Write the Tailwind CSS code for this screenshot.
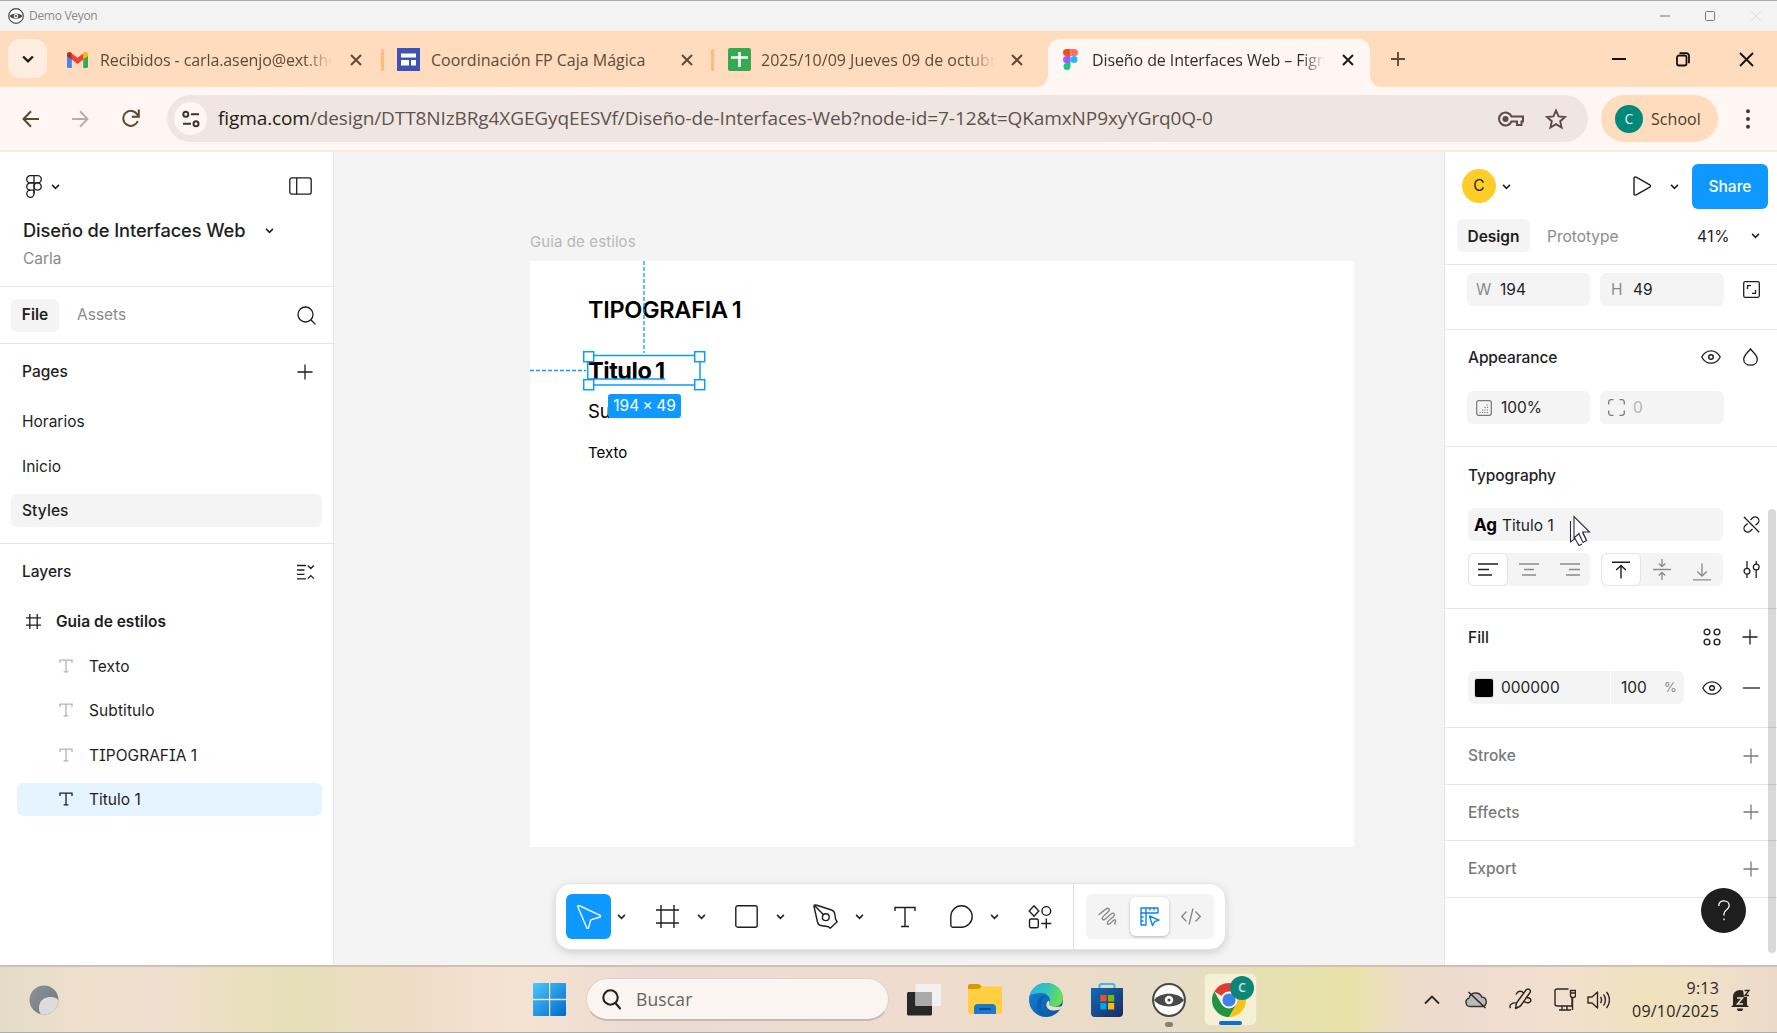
<!DOCTYPE html>
<html lang="es">
<head>
<meta charset="utf-8">
<title>Demo Veyon</title>
<script src="https://cdn.jsdelivr.net/npm/@tailwindcss/browser@4"></script>
</head>
<body class="w-[1777px] h-[1033px] overflow-hidden bg-[#f3f3f3] font-['Inter',sans-serif] text-[#1e1e1e]">
<svg class="hidden">
  <symbol id="chev" viewBox="0 0 10 10"><path d="M1.2 3.2 5 7 8.800 3.200" fill="none" stroke="currentColor" stroke-width="1.700"/></symbol>
  <symbol id="plus" viewBox="0 0 16 16"><path d="M8 .5v15M.5 8h15" fill="none" stroke="currentColor" stroke-width="1.3"/></symbol>
  <symbol id="x" viewBox="0 0 12 12"><path d="M1 1l10 10M11 1 1 11" fill="none" stroke="currentColor" stroke-width="2"/></symbol>
  <symbol id="tee" viewBox="0 0 14 14"><path d="M1 4V1.2h12V4M7 1.2v11.6M4.6 12.8h4.8" fill="none" stroke="currentColor" stroke-width="1.3"/></symbol>
  <symbol id="eye" viewBox="0 0 20 14"><path d="M.8 7C3 2.6 6.3.8 10 .8S17 2.600 19.200 7C17 11.400 13.700 13.200 10 13.200S3 11.400.8 7Z" fill="none" stroke="currentColor" stroke-width="1.3"/><circle cx="10" cy="7" r="2.300" fill="none" stroke="currentColor" stroke-width="1.4"/></symbol>
</svg>

<!-- window title bar -->
<div class="flex h-[31px] items-center border-t border-[#a9a7a9] bg-[#f3f3f3] pl-2 text-[#8a8a8a] font-['Open_Sans',sans-serif]">
  <svg class="size-4 shrink-0" viewBox="0 0 16 16"><circle cx="8" cy="8" r="7.300" fill="#fff" stroke="#4a4a4a" stroke-width="1.200"/><path d="M1.500 8C4 4.500 12 4.500 14.500 8 12 11.500 4 11.500 1.500 8Z" fill="#4a4a4a"/><circle cx="8" cy="8" r="2.200" fill="#fff"/><circle cx="8" cy="8" r="1.100" fill="#4a4a4a"/></svg>
  <span class="ml-[5px] w-[1631px] text-[12px] tracking-[-0.3px]">Demo Veyon</span>
  <svg class="h-3 w-[104px]" viewBox="0 0 104 12" fill="none"><path d="M0 6h10" stroke="#777"/><rect x="45.500" y="1.500" width="9" height="9" rx="1" stroke="#777"/><path d="M91 1l10 10M101 1 91 11" stroke="#ddd"/></svg>
</div>

<!-- browser tabs -->
<div class="relative flex h-14 items-end bg-[#fedcbd] font-['Open_Sans',sans-serif] text-[16px] text-[#5e4b35]">
  <div class="mb-[9px] ml-2 flex size-[39px] shrink-0 items-center justify-center rounded-xl bg-[#ffeee0] text-[#1f1a14]"><svg class="size-3.5" viewBox="0 0 10 10"><path d="M1.500 3.200 5 6.700 8.500 3.200" fill="none" stroke="currentColor" stroke-width="1.700"/></svg></div>
  <div class="flex h-12 w-[337px] shrink-0 items-center pb-[7px] pl-5">
    <svg class="h-4 w-[21px] shrink-0" viewBox="0 0 21 16"><path d="M0 2.500V14.500A1.500 1.500 0 0 0 1.500 16H4.800V6Z" fill="#4285f4"/><path d="M21 2.500V14.500A1.500 1.500 0 0 1 19.500 16H16.200V6Z" fill="#34a853"/><path d="M16.200 2V7.600L21 4V2.500C21 .1 18.200-.6 16.500.8Z" fill="#fbbc04"/><path d="M4.800 7.600V1.500L10.500 5.800 16.200 1.500V7.600L10.500 12Z" fill="#ea4335"/><path d="M0 2.500V4L4.800 7.600V1.200L4.500.8C2.800-.6 0 .1 0 2.500Z" fill="#c5221f"/></svg>
    <div class="ml-3 w-[232px] overflow-hidden whitespace-nowrap pt-px tracking-[-0.1px] [mask-image:linear-gradient(90deg,#000_88%,transparent)]">Recibidos - carla.asenjo@ext.the</div>
    <svg class="ml-[18px] size-3"><use href="#x"/></svg>
    <div class="ml-[19px] h-[22px] w-[3px] rounded bg-[#fdbd76]"></div>
  </div>
  <div class="flex h-12 w-[331px] shrink-0 items-center pb-[7px] pl-[13px]">
    <svg class="size-[23px] shrink-0" viewBox="0 0 23 23"><path d="M0 0h23v23H0Z" fill="#3f51b5"/><path d="M4 5.500h15v4H4Zm0 6.500h8v5.500H4Zm10 0h5v5.500h-5Z" fill="#fff"/></svg>
    <div class="ml-[11px] w-[237px] overflow-hidden whitespace-nowrap pt-px">Coordinación FP Caja Mágica</div>
    <svg class="ml-[13px] size-3"><use href="#x"/></svg>
    <div class="ml-[18px] h-[22px] w-[3px] rounded bg-[#fdbd76]"></div>
  </div>
  <div class="flex h-12 w-[333px] shrink-0 items-center pb-[7px] pl-[13px]">
    <svg class="size-[23px] shrink-0" viewBox="0 0 23 23"><rect width="23" height="23" rx="2" fill="#34a853"/><path d="M3 9.500h17M11.500 4v15" stroke="#fff" stroke-width="2.600"/></svg>
    <div class="ml-[10px] w-[234px] overflow-hidden whitespace-nowrap pt-px [mask-image:linear-gradient(90deg,#000_88%,transparent)]">2025/10/09 Jueves 09 de octubre</div>
    <svg class="ml-4 size-3"><use href="#x"/></svg>
  </div>
  <div class="relative flex h-12 w-[322px] shrink-0 items-center rounded-t-xl bg-[#fff7f3] pb-[7px] pl-[15px] text-[#332c29]">
    <svg class="absolute -left-3 bottom-0 size-3" viewBox="0 0 12 12"><path d="M12 0v12H0A12 12 0 0 0 12 0Z" fill="#fff7f3"/></svg>
    <svg class="absolute -right-3 bottom-0 size-3" viewBox="0 0 12 12"><path d="M0 0v12h12A12 12 0 0 1 0 0Z" fill="#fff7f3"/></svg>
    <svg class="h-[21px] w-[15px] shrink-0" viewBox="0 0 15 21"><path d="M3.500 0h4v7h-4a3.500 3.500 0 0 1 0-7Z" fill="#f24e1e"/><path d="M7.500 0h4a3.500 3.500 0 0 1 0 7h-4Z" fill="#ff7262"/><path d="M3.500 7h4v7h-4a3.500 3.500 0 0 1 0-7Z" fill="#a259ff"/><circle cx="11" cy="10.500" r="3.500" fill="#1abcfe"/><path d="M3.500 14h4v3.500a3.500 3.500 0 1 1-4-3.500Z" fill="#0acf83"/></svg>
    <div class="ml-[14px] w-[233px] overflow-hidden whitespace-nowrap pt-px tracking-[-0.1px] [mask-image:linear-gradient(90deg,#000_90%,transparent)]">Diseño de Interfaces Web – Figma</div>
    <svg class="ml-[17px] size-3 text-[#1f1a18]"><use href="#x"/></svg>
  </div>
  <svg class="mb-[21px] ml-[21px] size-[14px] shrink-0" viewBox="0 0 14 14"><path d="M7 0v14M0 7h14" stroke="#5e4b35" stroke-width="1.900"/></svg>
  <svg class="mb-[20px] ml-[207px] h-4 w-36 shrink-0" viewBox="0 0 144 16" fill="none" stroke="#111" stroke-width="1.800"><path d="M0 8h14M128 2l13 13M141 2 128 15"/><rect x="65" y="4.500" width="9.500" height="10" rx="2"/><path d="M67.500 2.200h6.500a3 3 0 0 1 3 3v7"/></svg>
</div>

<!-- address bar -->
<div class="flex h-[65px] items-center border-b-2 border-[#f9e9df] bg-[#fff7f3] pl-[22px] font-['Open_Sans',sans-serif] text-[#5b4731]">
  <svg class="h-[18px] w-[17px] shrink-0" viewBox="0 0 17 18" fill="none" stroke="currentColor" stroke-width="2"><path d="M17 9H1.500M9 1.200 1.500 9 9 16.800"/></svg>
  <svg class="ml-[33px] h-[18px] w-[17px] shrink-0 text-[#b9b0aa]" viewBox="0 0 17 18" fill="none" stroke="currentColor" stroke-width="2"><path d="M0 9h15.500M8 1.200 15.500 9 8 16.800"/></svg>
  <svg class="ml-[33px] h-[19px] w-[18px] shrink-0" viewBox="0 0 18 19" fill="none" stroke="currentColor" stroke-width="2"><path d="M15.800 12A7.500 7.500 0 1 1 15 5.200l1.500 2"/><path d="M16.800 .5v7.200h-7"/></svg>
  <div class="ml-[27px] flex h-[47px] w-[1421px] shrink-0 items-center rounded-full bg-[#efe6e1] pl-[7px] text-[#5d5450]">
    <div class="flex size-[33px] shrink-0 items-center justify-center rounded-full bg-[#fff7f3]"><svg class="size-[18px]" viewBox="0 0 18 18" fill="none" stroke="#3a3330" stroke-width="2"><circle cx="3.800" cy="4.300" r="2.500"/><path d="M9 4.300h8M1 13.700h8"/><circle cx="14" cy="13.700" r="2.500"/></svg></div>
    <div class="ml-[11px] w-[1280px] whitespace-nowrap text-[19px] tracking-[-0.1px]"><span class="text-[#211c1a]">figma.com</span>/design/DTT8NIzBRg4XGEGyqEESVf/Diseño-de-Interfaces-Web?node-id=7-12&amp;t=QKamxNP9xyYGrq0Q-0</div>
    <svg class="h-4 w-[26px] shrink-0" viewBox="0 0 26 16" fill="none" stroke="#5b4a45" stroke-width="2"><path d="M13.500 5.500H25v5h-1.500V14H19v-3.500h-5.500A6.500 6.500 0 1 1 13.500 5.500Z"/><circle cx="7.500" cy="8" r="2" fill="#5b4a45"/></svg>
    <svg class="ml-[21px] size-[22px] shrink-0" viewBox="0 0 22 22" fill="none" stroke="#5b4a45" stroke-width="1.900"><path d="m11 2.500 2.600 5.900 6.400.6-4.800 4.200 1.400 6.300L11 16.200l-5.600 3.300 1.400-6.300L2 9l6.400-.6Z"/></svg>
  </div>
  <div class="ml-[13px] flex h-[47px] w-[117px] shrink-0 items-center rounded-full bg-[#fedcbd] pl-[14px] text-[16px] text-[#4f3a29]">
    <div class="flex size-7 items-center justify-center rounded-full bg-[#00897b] text-[14px] text-white/90">C</div>
    <span class="ml-2 tracking-[0.05px]">School</span>
  </div>
  <svg class="ml-7 h-5 w-1 shrink-0" viewBox="0 0 4 20" fill="#4a3a2a"><circle cx="2" cy="2.200" r="2"/><circle cx="2" cy="10" r="2"/><circle cx="2" cy="17.800" r="2"/></svg>
</div>

<main class="flex h-[813px]">
  <!-- left panel -->
  <aside class="h-full w-[334px] shrink-0 border-r border-[#e6e6e6] bg-white text-[15.500px]">
    <div class="h-[135px] border-b border-[#e6e6e6] pl-[23px]">
      <div class="flex h-[68px] items-center">
        <svg class="ml-[3px] h-[23px] w-4" viewBox="0 0 16 23" fill="none" stroke="#1e1e1e" stroke-width="1.300"><rect x=".7" y=".7" width="14.600" height="7.200" rx="3.600"/><path d="M8 .7v18M8 7.900H4.300a3.600 3.600 0 0 0 0 7.200H8"/><path d="M8 11.500a3.600 3.600 0 1 1 7.300 0 3.600 3.600 0 0 1-7.300 0ZM4.300 15.100A3.600 3.600 0 1 0 8 18.700v-3.600"/></svg>
        <svg class="ml-[9px] size-[9px]"><use href="#chev"/></svg>
        <svg class="ml-[229px] h-[18px] w-[23px]" viewBox="0 0 23 18" fill="none" stroke="#1e1e1e" stroke-width="1.300"><rect x=".8" y=".8" width="21.400" height="16.400" rx="2.200"/><path d="M7.700.8v16.400"/></svg>
      </div>
      <div class="flex h-[21px] items-center"><span class="w-[242px] whitespace-nowrap text-[18.300px] font-medium tracking-[-0.1px]">Diseño de Interfaces Web</span><svg class="size-[9px]"><use href="#chev"/></svg></div>
      <div class="flex h-9 items-center text-[#8b8b8b]">Carla</div>
    </div>
    <div class="flex h-[57px] items-center border-b border-[#e6e6e6] pl-[11px]">
      <div class="flex h-[33px] w-12 items-center justify-center rounded-md bg-[#f4f4f4] font-semibold">File</div>
      <div class="ml-[18px] w-[220px] text-[#8b8b8b]">Assets</div>
      <svg class="size-[19px]" viewBox="0 0 19 19" fill="none" stroke="#1e1e1e" stroke-width="1.300"><circle cx="8.500" cy="8.500" r="7.500"/><path d="m13.800 13.800 4.600 4.600"/></svg>
    </div>
    <div class="h-[200px] border-b border-[#e6e6e6]">
      <div class="flex h-[55px] items-center pl-[22px]"><span class="w-[275px] font-medium">Pages</span><svg class="size-4"><use href="#plus"/></svg></div>
      <div class="flex h-[44.500px] items-center pl-[22px]">Horarios</div>
      <div class="flex h-[44.500px] items-center pl-[22px] pt-px">Inicio</div>
      <div class="flex h-[44.500px] items-center pl-[11px]"><div class="flex h-[33px] w-[311px] items-center rounded-md bg-[#f4f4f4] pl-[11px] font-medium tracking-[0.1px]">Styles</div></div>
    </div>
    <div class="flex h-[55px] items-center pl-[22px]"><span class="w-[275px] font-medium">Layers</span>
      <svg class="h-4 w-[18px]" viewBox="0 0 18 16" fill="none" stroke="#1e1e1e" stroke-width="1.300"><path d="M0 1.500h9M0 6h7.500M0 10.300h7.500M0 14.800h9M10.800 1.500l3 3 3-3M10.800 14.600l3-3 3 3"/></svg></div>
    <div class="flex h-[44.500px] items-center pl-[26px] font-semibold"><svg class="h-[15px] w-[15px]" viewBox="0 0 15 15" fill="none" stroke="#1e1e1e" stroke-width="1.300"><path d="M3.800 0v15M11.200 0v15M0 3.800h15M0 11.200h15"/></svg><span class="ml-[15px]">Guia de estilos</span></div>
    <div class="flex h-[44.500px] items-center pl-[59px]"><svg class="size-[14px] text-[#b3b3b3]"><use href="#tee"/></svg><span class="ml-4 pt-px">Texto</span></div>
    <div class="flex h-[44.500px] items-center pl-[59px]"><svg class="size-[14px] text-[#b3b3b3]"><use href="#tee"/></svg><span class="ml-4 tracking-[0.1px]">Subtitulo</span></div>
    <div class="flex h-[44.500px] items-center pl-[59px]"><svg class="size-[14px] text-[#b3b3b3]"><use href="#tee"/></svg><span class="ml-4 pt-px [font-feature-settings:'cv08']">TIPOGRAFIA 1</span></div>
    <div class="flex h-[44.500px] items-center pl-[17px]"><div class="flex h-[33px] w-[305px] items-center rounded-md bg-[#e5f4ff] pl-[42px]"><svg class="size-[14px]"><use href="#tee"/></svg><span class="ml-4">Titulo 1</span></div></div>
  </aside>

  <!-- canvas -->
  <section class="relative h-full w-[1110px] shrink-0 overflow-hidden bg-[#f4f4f4]">
    <div class="absolute left-[196px] top-[80px] text-[15px] leading-5 tracking-[0.1px] text-[#b8b8b8]">Guia de estilos</div>
    <div class="absolute left-[196px] top-[109px] h-[586px] w-[824px] bg-white text-black">
      <div class="absolute left-[58px] top-[34px] whitespace-nowrap text-[23.500px] font-semibold leading-[30px] tracking-[-0.3px] [word-spacing:-1.500px]">TIPOGRAFIA 1</div>
      <div class="absolute left-[58px] top-[95px] whitespace-nowrap text-[23.500px] font-bold leading-[30px] tracking-[-0.45px] [word-spacing:-1.500px]">Titulo 1</div>
      <div class="absolute left-[58px] top-[138px] text-[18.500px] leading-6">Subtitulo</div>
      <div class="absolute left-[58px] top-[180px] text-[15px] leading-6">Texto</div>
      <svg class="absolute left-0 top-0 h-[130px] w-[180px]" viewBox="0 0 180 130" fill="none" stroke="#0d99ff"><path d="M114 0v92M0 109.500h56" stroke-width="1.300" stroke-dasharray="4 2"/><path d="M58 118h77" stroke-width="1.500"/><rect x="57.700" y="94.500" width="112.300" height="29.500" stroke-width="1.500"/><g fill="#fff" stroke-width="1.500"><rect x="53.700" y="90.700" width="10" height="10"/><rect x="164.700" y="90.700" width="10" height="10"/><rect x="53.700" y="118.700" width="10" height="10"/><rect x="164.700" y="118.700" width="10" height="10"/></g></svg>
      <div class="absolute left-[78px] top-[133px] flex h-6 w-[73px] items-center justify-center whitespace-nowrap rounded-[3px] bg-[#0d99ff] text-[15.500px] text-white [word-spacing:-1px]">194 × 49</div>
    </div>

    <!-- floating toolbar -->
    <div class="absolute left-[221px] top-[731px] flex h-[67px] w-[671px] items-center rounded-2xl border border-[#e4e4e4] bg-white pl-[10px] shadow-[0_3px_8px_rgba(0,0,0,0.14)]">
      <div class="flex size-[45px] shrink-0 items-center justify-center rounded-md bg-[#0d99ff]"><svg class="size-6" viewBox="0 0 24 24" fill="none" stroke="#fff" stroke-width="1.400" stroke-linejoin="round"><path d="M.8 1.800 10 23.200c.3.700 1.200.6 1.400-.1L13.500 15.800c.2-.7.500-1 1.200-1.200L23 12c.8-.3.800-1.200.1-1.600L2.200.5C1.200 0 .4.800.8 1.800Z"/></svg></div>
      <svg class="ml-[6px] size-[9px] shrink-0"><use href="#chev"/></svg>
      <svg class="ml-[30px] size-[23px] shrink-0" viewBox="0 0 23 23" fill="none" stroke="#1e1e1e" stroke-width="1.400"><path d="M5 0v23M18 0v23M0 5h23M0 18h23"/></svg>
      <svg class="ml-[18px] size-[9px] shrink-0"><use href="#chev"/></svg>
      <svg class="ml-[29px] size-[23px] shrink-0" viewBox="0 0 23 23" fill="none" stroke="#1e1e1e" stroke-width="1.400"><rect x=".8" y=".8" width="21.400" height="21.400" rx="2"/></svg>
      <svg class="ml-[18px] size-[9px] shrink-0"><use href="#chev"/></svg>
      <svg class="ml-[28px] size-[25px] shrink-0" viewBox="0 0 25 25" fill="none" stroke="#1e1e1e" stroke-width="1.400" stroke-linejoin="round"><path d="M1 2.500 4.500 18c.4 1.800 1.600 3.200 3.400 3.500l7.600 1.200 1.700 1.600 7-6.600-1.600-2.200-.8-5.500c-.3-2-1.300-3.300-3.200-4L3 1C1.600.5.700 1.200 1 2.500ZM2 2l8.800 9"/><circle cx="12.800" cy="13.200" r="3.400"/></svg>
      <svg class="ml-[17px] size-[9px] shrink-0"><use href="#chev"/></svg>
      <svg class="ml-[30px] size-[22px] shrink-0" viewBox="0 0 22 22" fill="none" stroke="#1e1e1e" stroke-width="1.400"><path d="M1 5V1.500h20V5M11 1.500v19M7 20.500h8"/></svg>
      <svg class="ml-[34px] size-[23px] shrink-0" viewBox="0 0 23 23" fill="none" stroke="#1e1e1e" stroke-width="1.400"><path d="M.8 11.500A10.700 10.700 0 1 1 11.500 22.200H3A2.200 2.200 0 0 1 .8 20Z"/></svg>
      <svg class="ml-[17px] size-[9px] shrink-0"><use href="#chev"/></svg>
      <svg class="ml-[29px] size-6 shrink-0" viewBox="0 0 24 24" fill="none" stroke="#1e1e1e" stroke-width="1.400"><path d="M6 .8 10.800 6 6 11.200 1.200 6Z"/><circle cx="18.300" cy="6" r="4.400"/><rect x="1.500" y="14" width="8.800" height="8.800" rx="1.500"/><path d="M18.300 13.500v10M13.300 18.500h10"/></svg>
      <div class="ml-[21px] h-full w-px shrink-0 bg-[#e0e0e0]"></div>
      <div class="ml-[12px] flex h-[45px] w-[128px] shrink-0 items-center rounded-md bg-[#f4f4f4]">
        <svg class="ml-[12px] size-[19px] shrink-0" viewBox="0 0 19 19" fill="none" stroke="#8a8a8a" stroke-width="1.400" stroke-linecap="round" stroke-linejoin="round"><path d="M1 7.500C4 5.500 6.500 2.700 9 1.500c1.800-.8 3 .8 1.800 2.500C9 6.500 5 8.500 4.300 11c-.4 1.600 1 2.300 2.500 1.300C9.500 10.500 11.500 7.700 14 6.400c1.800-.9 3.200.6 2 2.400-1.700 2.500-5.500 4-6.500 6.500-.6 1.700.9 2.500 2.300 1.500 1.700-1.200 2.700-2.900 4.200-3.800 1.200-.7 2 .2 1.500 1.400-.5 1-1 1.600-.5 2.600"/></svg>
        <div class="ml-[13px] flex h-[39px] w-[39px] shrink-0 items-center justify-center rounded-md bg-white shadow-[0_1px_3px_rgba(0,0,0,0.25)]"><svg class="size-5" viewBox="0 0 20 20" fill="none" stroke="#0d83ea" stroke-width="1.400" stroke-linejoin="round"><path d="M1 1h17v5H6v12H1ZM1 6h5V1M10 1v2.500M14 1v2.500M1 10h2.500M1 14h2.500"/><path d="m9.500 9 3 9.500 2.200-3.800 4.300-1.500Z"/></svg></div>
        <svg class="ml-3 h-[17px] w-5 shrink-0" viewBox="0 0 20 17" fill="none" stroke="#8a8a8a" stroke-width="1.400"><path d="M5.500 3.500.8 8.500l4.700 5M14.500 3.500l4.700 5-4.700 5M12 .5 8 16.500"/></svg>
      </div>
    </div>
  </section>

  <!-- right panel -->
  <aside class="relative h-full w-[333px] shrink-0 border-l border-[#e6e6e6] bg-white text-[15.500px]">
    <div class="h-[113px] border-b border-[#e6e6e6]">
      <div class="flex h-[67px] items-center pl-[17px] pt-[1px]">
        <div class="flex size-[34px] items-center justify-center rounded-full bg-[#ffcd29]">C</div>
        <svg class="ml-[6px] size-[9px]"><use href="#chev"/></svg>
        <svg class="ml-[122px] h-5 w-[19px]" viewBox="0 0 19 20" fill="none" stroke="#1e1e1e" stroke-width="1.400" stroke-linejoin="round"><path d="M1 2.300v15.400c0 1.200 1.200 1.800 2.200 1.100l13.600-7.700c.9-.5.900-1.700 0-2.200L3.200 1.200C2.200.6 1 1.100 1 2.300Z"/></svg>
        <svg class="ml-[18px] size-[9px]"><use href="#chev"/></svg>
        <div class="ml-[13px] flex h-[45px] w-[76px] items-center justify-center rounded-md bg-[#0d99ff] pt-px font-medium text-white">Share</div>
      </div>
      <div class="flex h-[33px] items-center pl-3">
        <div class="flex h-full w-[73px] items-center justify-center rounded-md bg-[#f4f4f4] pt-0.5 font-semibold">Design</div>
        <span class="ml-[17px] w-[150px] pt-0.5 text-[#8b8b8b]">Prototype</span><span class="w-[54px] pt-0.5 tracking-[0.6px]">41%</span><svg class="size-[9px]"><use href="#chev"/></svg>
      </div>
    </div>
    <div class="flex h-[65px] border-b border-[#e6e6e6] pl-[22px] pt-2">
      <div class="flex h-[33px] w-[123px] items-center rounded-md bg-[#f4f4f4] pl-[9px] pt-px"><span class="w-6 text-[#8b8b8b]">W</span>194</div>
      <div class="ml-[10px] flex h-[33px] w-[124px] items-center rounded-md bg-[#f4f4f4] pl-[11px] pt-px"><span class="w-[22px] text-[#8b8b8b]">H</span>49</div>
      <svg class="ml-[19px] mt-2 size-[17px]" viewBox="0 0 17 17" fill="none" stroke="#1e1e1e" stroke-width="1.300"><rect x=".7" y=".7" width="15.600" height="15.600" rx="1.500"/><path d="M4.500 8V4.700H8M9 12.300h3.500V9" /></svg>
    </div>
    <div class="h-[117px] border-b border-[#e6e6e6] pl-[22px]">
      <div class="flex h-[54px] items-center"><span class="w-[234px] pl-px pt-0.5 font-medium tracking-[-0.1px]">Appearance</span><svg class="h-[14px] w-5"><use href="#eye"/></svg>
        <svg class="ml-[22px] h-[18px] w-[15px]" viewBox="0 0 15 18" fill="none" stroke="#1e1e1e" stroke-width="1.300"><path d="M7.500.8C9.500 4 14.300 7 14.300 11.200c0 3.500-2.800 6-6.800 6s-6.800-2.500-6.800-6C.7 7 5.500 4 7.500.8Z"/></svg></div>
      <div class="mt-[7px] flex">
        <div class="flex h-[33px] w-[123px] items-center rounded-md bg-[#f4f4f4] pl-[9px]"><svg class="mr-[9px] size-4" viewBox="0 0 16 16" fill="none" stroke="#777" stroke-width="1.200"><rect x=".7" y=".7" width="14.600" height="14.600" rx="2"/><path d="M3.500 12.500h9.500M6 10h7M8.500 7.500H13M10.500 5H13" stroke-dasharray="1.200 1.200"/></svg>100%</div>
        <div class="ml-[10px] flex h-[33px] w-[124px] items-center rounded-md bg-[#f4f4f4] pl-2 text-[#b3b3b3]"><svg class="mr-[8px] size-[17px]" viewBox="0 0 17 17" fill="none" stroke="#777" stroke-width="1.300"><path d="M.7 5.500V3A2.300 2.300 0 0 1 3 .7h2.500M11.500.7H14A2.300 2.300 0 0 1 16.300 3v2.500M16.300 11.500V14a2.300 2.300 0 0 1-2.300 2.300h-2.500M5.500 16.300H3A2.300 2.300 0 0 1 .7 14v-2.500"/></svg>0</div>
      </div>
    </div>
    <div class="h-[162px] border-b border-[#e6e6e6] pl-[23px]">
      <div class="flex h-14 items-center pt-px font-medium tracking-[-0.1px]">Typography</div>
      <div class="mt-[5px] flex items-center">
        <div class="flex h-[33px] w-[255px] items-center rounded-md bg-[#f4f4f4] pl-[6px] pt-0.5"><span class="w-7 text-[17px] font-bold text-black">Ag</span>Titulo 1</div>
        <svg class="ml-5 size-[17px]" viewBox="0 0 17 17" fill="none" stroke="#1e1e1e" stroke-width="1.300"><path d="M.8.8l15.400 15.400M7.500 4l2-2a3.600 3.600 0 0 1 5.300 5.300l-2.300 2M4.600 7.500l-2.500 2.300a3.600 3.600 0 0 0 5.200 5.200L9.500 13"/></svg>
      </div>
      <div class="mt-3 flex items-center">
        <div class="flex h-[33px] w-[122px] items-center rounded-md bg-[#f4f4f4]">
          <div class="flex h-full w-10 items-center justify-center rounded-md border border-[#e4e4e4] bg-white"><svg class="h-[13px] w-5" viewBox="0 0 20 13" stroke="#1e1e1e" stroke-width="1.400"><path d="M0 1h20M0 6.500h11M0 12h14"/></svg></div>
          <svg class="ml-[11px] h-[13px] w-5" viewBox="0 0 20 13" stroke="#8a8a8a" stroke-width="1.400"><path d="M0 1h20M5 6.500h10M3 12h14"/></svg>
          <svg class="ml-[21px] h-[13px] w-5" viewBox="0 0 20 13" stroke="#8a8a8a" stroke-width="1.400"><path d="M0 1h20M9 6.500h11M6 12h14"/></svg>
        </div>
        <div class="ml-[11px] flex h-[33px] w-[122px] items-center rounded-md bg-[#f4f4f4]">
          <div class="flex h-full w-10 items-center justify-center rounded-md border border-[#e4e4e4] bg-white"><svg class="h-[18px] w-[18px]" viewBox="0 0 18 18" fill="none" stroke="#1e1e1e" stroke-width="1.400"><path d="M0 1.200h18M9 17.500V4.500M4.200 9 9 4.400 13.800 9"/></svg></div>
          <svg class="ml-3 h-[21px] w-[18px]" viewBox="0 0 18 21" fill="none" stroke="#8a8a8a" stroke-width="1.300"><path d="M0 10.500h18M9 0v7.500M5.700 4.500 9 7.500l3.300-3M9 21v-7.500M5.700 16.500l3.300-3 3.300 3"/></svg>
          <svg class="ml-[22px] mt-1 h-[18px] w-[18px]" viewBox="0 0 18 18" fill="none" stroke="#8a8a8a" stroke-width="1.300"><path d="M0 16.800h18M9 .5v12.500M4.200 8.500 9 13l4.800-4.500"/></svg>
        </div>
        <svg class="ml-5 size-[17px]" viewBox="0 0 17 17" fill="none" stroke="#1e1e1e" stroke-width="1.300"><path d="M4 0v7.300M4 13.200V17M13.200 0v3M13.200 9v8"/><circle cx="4" cy="10.300" r="2.900"/><circle cx="13.200" cy="6" r="2.900"/></svg>
      </div>
    </div>
    <div class="h-[119px] border-b border-[#e6e6e6] pl-[23px]">
      <div class="flex h-14 items-center"><span class="w-[235px] pt-px font-medium">Fill</span>
        <svg class="size-[18px]" viewBox="0 0 18 18" fill="none" stroke="#1e1e1e" stroke-width="1.400"><circle cx="4" cy="4" r="2.900"/><circle cx="14" cy="4" r="2.900"/><circle cx="4" cy="14" r="2.900"/><circle cx="14" cy="14" r="2.900"/></svg>
        <svg class="ml-[21px] size-4"><use href="#plus"/></svg></div>
      <div class="mt-[6px] flex items-center">
        <div class="flex h-[33px] w-[142px] items-center rounded-l-md bg-[#f4f4f4] pl-[6px]"><div class="mr-[7px] size-[20px] rounded-[3px] border border-[#ddd] bg-black"></div>000000</div>
        <div class="ml-px flex h-[33px] w-[73px] items-center rounded-r-md bg-[#f4f4f4] pl-[10px]"><span class="w-[43px]">100</span><span class="text-[13px] text-[#8b8b8b]">%</span></div>
        <svg class="ml-[18px] h-[14px] w-5"><use href="#eye"/></svg>
        <svg class="ml-[21px] h-2 w-[17px]" viewBox="0 0 17 8"><path d="M0 4h17" stroke="#1e1e1e" stroke-width="1.300"/></svg>
      </div>
    </div>
    <div class="flex h-[56.500px] items-center border-b border-[#e6e6e6] pl-[23px] text-[#7a7a7a]"><span class="w-[275px] font-medium">Stroke</span><svg class="size-4"><use href="#plus"/></svg></div>
    <div class="flex h-[56.500px] items-center border-b border-[#e6e6e6] pl-[23px] text-[#7a7a7a]"><span class="w-[275px] font-medium">Effects</span><svg class="size-4"><use href="#plus"/></svg></div>
    <div class="flex h-[56.500px] items-center border-b border-[#e6e6e6] pl-[23px] text-[#7a7a7a]"><span class="w-[275px] font-medium">Export</span><svg class="size-4"><use href="#plus"/></svg></div>
    <div class="absolute right-[1px] top-[357px] h-[444px] w-2 rounded-full bg-black/15"></div>
    <div class="absolute left-[256px] top-[736px] flex size-[45px] items-center justify-center rounded-full bg-[#1e1e1e]"><svg class="h-[21px] w-3" viewBox="0 0 12 21" fill="none" stroke="#fff" stroke-width="1.300"><path d="M.8 6V5.500C.8 2.700 3 .8 6 .8s5.200 2 5.200 4.700c0 2-1 3.100-2.600 4.300C6.900 11 6 11.800 6 13.800V15.500M6 18.500v1.800"/></svg></div>
    <svg class="absolute left-[124px] top-[363px] h-8 w-6" viewBox="0 0 24 32" fill="#fff" stroke="#2b2b3a" stroke-width="1.100"><path d="M1.500 6v21l4.500-3.500 4 7 3-1.500M5 1.500v21.500l5-4.500 4 7.500 3-2-3.500-7H20.500Z"/><path d="m10 19 4 8.500 3.500-2-4-8"/></svg>
  </aside>
</main>

<!-- taskbar -->
<footer class="relative flex h-[68px] items-center border-t-2 border-b border-t-[#cdc0b4] border-b-[#a9aeb3] bg-[linear-gradient(90deg,#e3dcc9_0%,#efe0cb_5%,#f0dfd0_9%,#e9e0bb_14%,#e6dfb8_17%,#f0dcc8_24%,#f5e3d2_29%,#eddbd3_36%,#efdccf_52%,#eadcc6_61%,#e6dcc8_66%,#e7e0b4_71%,#e8e2a8_76%,#ecdcc8_79%,#eedbd0_82%,#f2dfd0_87%,#f0e2bd_93%,#efdfc9_97%,#ecd9c8_100%)] pl-[29px] font-['Open_Sans',sans-serif] text-[#2b2622]">
  <svg class="size-[30px] shrink-0" viewBox="0 0 30 30"><defs><linearGradient id="mn" x1="0" y1="0" x2="1" y2="1"><stop offset="0" stop-color="#8d9299"/><stop offset="1" stop-color="#6f757d"/></linearGradient></defs><circle cx="15" cy="15" r="14.500" fill="url(#mn)"/><path d="M29.500 15A14.500 14.500 0 0 1 12 29.200C8 24 10 14 18 12.500c5-1 9 0 11.500 2.500Z" fill="#dcdcdf"/></svg>
  <svg class="ml-[474px] size-[33px] shrink-0" viewBox="0 0 33 33"><defs><linearGradient id="wn" x1="0" y1="0" x2="1" y2="1"><stop offset="0" stop-color="#4cc8fa"/><stop offset="1" stop-color="#0069cc"/></linearGradient></defs><path d="M1 0h15v15.700H0V1A1 1 0 0 1 1 0ZM17.200 0H32a1 1 0 0 1 1 1v14.700H17.200ZM0 17.300h16V33H1a1 1 0 0 1-1-1ZM17.200 17.300H33V32a1 1 0 0 1-1 1H17.200Z" fill="url(#wn)"/></svg>
  <div class="ml-5 flex h-[43px] w-[303px] shrink-0 items-center rounded-full border border-b-2 border-[#e0d3c9] border-b-[#c5b9b0] bg-[#faf5f1] pl-[14px] text-[17.500px] text-[#6a6461]"><svg class="size-[21px]" viewBox="0 0 21 21" fill="none" stroke="#26221f" stroke-width="2.100" stroke-linecap="round"><circle cx="9.500" cy="8.500" r="7.200"/><path d="m14.500 14 4.500 5.500"/></svg><span class="ml-[14px] pt-px tracking-[0.15px]">Buscar</span></div>
  <svg class="ml-[18px] h-8 w-[34px] shrink-0" viewBox="0 0 34 32"><rect y="8" width="25" height="23.500" rx="1.500" fill="#282828"/><rect x="8.500" width="25.500" height="22" rx="1.500" fill="#f3f1f0"/><path d="M8.500 8H25v14H8.500Z" fill="#aaa"/></svg>
  <svg class="ml-[27px] h-[31px] w-[34px] shrink-0" viewBox="0 0 34 31"><path d="M0 2A2 2 0 0 1 2 0h9l3 3-3 4H0Z" fill="#d99a00"/><path d="M0 5h11l3-2.500h18a2 2 0 0 1 2 2V28a2 2 0 0 1-2 2H2a2 2 0 0 1-2-2Z" fill="#ffcf3f"/><path d="M6 30v-6a4 4 0 0 1 4-4h14a4 4 0 0 1 4 4v6Z" fill="#1a78cf"/><rect x="11" y="24" width="12" height="2" rx="1" fill="#0c4f94"/></svg>
  <svg class="ml-[27px] size-[34px] shrink-0" viewBox="0 0 34 34"><defs><linearGradient id="e1" x1="0" y1=".2" x2="1" y2=".5"><stop offset="0" stop-color="#2bb4e8"/><stop offset=".5" stop-color="#34c6b8"/><stop offset="1" stop-color="#6fe04d"/></linearGradient><linearGradient id="e2" x1="0" y1="0" x2="1" y2="1"><stop offset="0" stop-color="#1488d8"/><stop offset="1" stop-color="#0b4f9e"/></linearGradient></defs><circle cx="17" cy="17" r="17" fill="url(#e2)"/><path d="M1 12C3 4.500 9.500 0 17 0c10 0 17 7 17 15 0 5-3.500 8.500-8.500 8.500-3.500 0-5.500-1.200-5.500-2.500 0-1 1-1.500 1-4 0-3.500-4-7-9-7-5.500 0-9 1.500-11 2Z" fill="url(#e1)"/><path d="M12 21c0-4 2-7 5-8.500-6 0-9 5-9 9.500C8 28 12 33 18 34c-4-3-6-8-6-13Z" fill="#0b5fb0"/><path d="M20 17.500c-2 1-3 3-2.500 5.500C18.500 27 24 29 31 26.500L34 24l-4 8h4V23c-3 1-6 .8-8.500.5-3.500 0-5.500-1.200-5.500-2.500 0-1 1-1.500 0-3.500Z" fill="#e9dec8"/></svg>
  <svg class="ml-[28px] h-[34px] w-8 shrink-0" viewBox="0 0 32 34"><defs><linearGradient id="st" x1="0" y1="0" x2="1" y2="1"><stop offset="0" stop-color="#0f6cbd"/><stop offset="1" stop-color="#1b2c5c"/></linearGradient></defs><path d="M8.500 7V3A2 2 0 0 1 10.500 1h11a2 2 0 0 1 2 2v4" fill="none" stroke="#3bb8ee" stroke-width="2"/><path d="M0 5h32v25a4 4 0 0 1-4 4H4a4 4 0 0 1-4-4Z" fill="url(#st)"/><path d="M9.300 12h6.200v6.500H9.300Z" fill="#f25022"/><path d="M17 12h6.200v6.500H17Z" fill="#7fba00"/><path d="M9.300 20h6.200v6.500H9.300Z" fill="#00a4ef"/><path d="M17 20h6.200v6.500H17Z" fill="#ffb900"/></svg>
  <div class="relative ml-[29px] shrink-0"><svg class="size-[34px]" viewBox="0 0 34 34"><circle cx="17" cy="17" r="15.900" fill="#fff" stroke="#484848" stroke-width="2"/><path d="M2 17C8 8.500 26 8.500 32 17 26 25.500 8 25.500 2 17Z" fill="#484848"/><circle cx="17" cy="17" r="4.200" fill="#fff"/><circle cx="17" cy="17" r="1.600" fill="#484848"/></svg><div class="absolute -bottom-[10px] left-[13px] h-[5px] w-2 rounded-full bg-[#85816b]"></div></div>
  <div class="relative ml-[18px] flex size-[53px] shrink-0 items-center justify-center rounded-md border border-[#e6e2c2] bg-[#f5f0d6]">
    <svg class="mr-1 size-[34px]" viewBox="0 0 34 34"><path d="M17 17 2.280 8.500A17 17 0 0 1 31.720 8.500Z" fill="#e33b2e"/><path d="M17 8.500h14.720A17 17 0 0 1 17 34L24.360 21.250Z" fill="#fbc116"/><path d="M2.280 8.500A17 17 0 0 0 17 34L24.360 21.250 17 24 9.640 21.250Z" fill="#229342"/><circle cx="17" cy="17" r="8.500" fill="#fff"/><circle cx="17" cy="17" r="6.600" fill="#3f7ff0"/></svg>
    <div class="absolute left-[25px] top-[2px] flex size-6 items-center justify-center rounded-full bg-[#0d8577] text-[12px] font-semibold text-white/80">C</div>
    <div class="absolute bottom-0 left-[14px] h-1 w-[23px] rounded-full bg-[#0a6fd0]"></div>
  </div>
  <svg class="ml-[167px] h-[10px] w-4 shrink-0" viewBox="0 0 16 10" fill="none" stroke="#2b2622" stroke-width="1.800"><path d="m1 8.500 7-7 7 7"/></svg>
  <svg class="ml-[25px] h-[18px] w-[22px] shrink-0" viewBox="0 0 22 18"><path d="M5 15.500a4.300 4.300 0 0 1-1-8.400A6.800 6.800 0 0 1 16.800 6a4.800 4.800 0 0 1 .5 9.500Z" fill="#bcbab8" stroke="#333" stroke-width="1.400"/><path d="M3.500 1 20.500 17" stroke="#2b2622" stroke-width="1.500"/></svg>
  <svg class="ml-[22px] h-[23px] w-[23px] shrink-0" viewBox="0 0 23 23" fill="none" stroke="#2b2622" stroke-width="1.400" stroke-linejoin="round"><path d="m6.500 20.500 1-5.500L17 2c1-1.300 2.500-1.300 3.500-.5s1.200 2.200.2 3.500L11.500 18ZM7 6.500c2-4 5.500-4 7.500-1.500M1.500 20C-.5 17 3 14.500 7.500 15M17.500 9.500c5 0 5.500 4 2.500 5-2.500.8-3.500 0-5-1"/></svg>
  <svg class="ml-[22px] h-[23px] w-[22px] shrink-0" viewBox="0 0 22 23" fill="none" stroke="#2b2622" stroke-width="1.400"><path d="M14.500 1H3A2 2 0 0 0 1 3v13a2 2 0 0 0 2 2h15V9M5 22h12M8 18v4M13 18v4M16.500 2.500h5v5a2 2 0 0 1-2 2h-1a2 2 0 0 1-2-2ZM18.500 9.500V22M16 5h5.500"/></svg>
  <svg class="ml-[11px] h-5 w-[23px] shrink-0" viewBox="0 0 23 20" fill="none" stroke="#2b2622" stroke-width="1.400" stroke-linejoin="round"><path d="M1 7v6h4l5.500 5V2L5 7ZM13.500 7c1.300 1.800 1.300 4.200 0 6M16.500 4.500c2.500 3 2.500 8 0 11M19.500 2c4 4.500 4 11.500 0 16"/></svg>
  <div class="w-[109px] shrink-0 text-right text-[16px] leading-[22.500px] tracking-[0.2px]"><div>9:13</div><div>09/10/2025</div></div>
  <div class="relative ml-3 h-[22px] w-[19px] shrink-0"><svg class="size-full" viewBox="0 0 19 22" fill="#2b2622"><path d="M2 16V8c0-4 3-7 7-7 4.200 0 7 3 7 7v8l2 2H0ZM6 19.500h6a3 3 0 0 1-6 0Z"/><path d="M6 9h5.500l-5 6H12" fill="none" stroke="#f0e2cc" stroke-width="1.500"/><path d="M12 0h7v8h-6Z" fill="#efe0c8"/><path d="M13.500 1.500h4.500l-4 5H18" fill="none" stroke="#2b2622" stroke-width="1.400"/></svg></div>
</footer>
</body>
</html>
